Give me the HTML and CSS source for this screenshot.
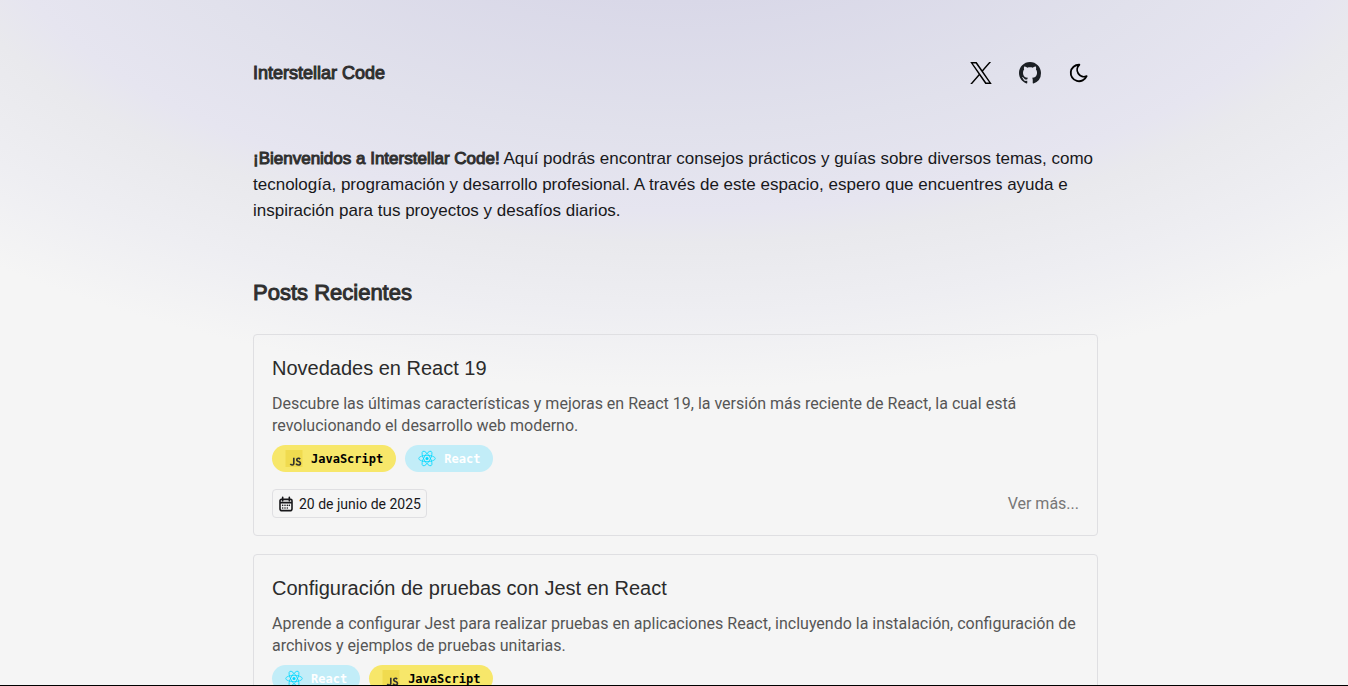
FILE: index.html
```html
<!DOCTYPE html>
<html lang="es">
<head>
<meta charset="utf-8">
<meta name="viewport" content="width=device-width, initial-scale=1">
<title>Interstellar Code</title>
<link rel="stylesheet" href="styles.css">
</head>
<body>
<svg class="defs" aria-hidden="true">
  <symbol id="js" viewBox="0 0 630 630"><path class="js-bg" d="M0 0h630v630H0z"/><path class="js-fg" d="M423 492c13 21 29 36 58 36 25 0 41-12 41-30 0-20-17-28-45-40l-15-7c-45-19-74-43-74-93 0-46 35-81 90-81 39 0 67 14 87 49l-48 31c-10-19-22-26-39-26-18 0-29 11-29 26 0 18 11 25 37 37l15 6c53 23 82 46 82 98 0 56-44 87-103 87-58 0-95-28-113-64zM206 497c9 17 18 32 39 32 20 0 32-8 32-38V283h61v209c0 63-37 92-91 92-48 0-77-25-91-55z"/></symbol>
  <symbol id="react" viewBox="-12 -11 24 22"><circle r="2" fill="currentColor"/><g fill="none" stroke="currentColor"><ellipse rx="11" ry="4.2"/><ellipse rx="11" ry="4.2" transform="rotate(60)"/><ellipse rx="11" ry="4.2" transform="rotate(120)"/></g></symbol>
  <symbol id="calendar" viewBox="0 0 24 24"><path fill="none" stroke="currentColor" stroke-width="2.4" stroke-linecap="round" stroke-linejoin="round" d="M5 5h14a2 2 0 0 1 2 2v12a3 3 0 0 1-3 3H6a3 3 0 0 1-3-3V7a2 2 0 0 1 2-2zM7 2v5M17 2v5M3 10h18M7 14h.01M10.500 14h.01M14 14h.01M17 14h.01M7 18h.01M10.500 18h.01M14 18h.01"/></symbol>
</svg>
<div class="page">
  <header class="header">
    <a class="brand" href="#">Interstellar Code</a>
    <nav class="nav">
      <a class="icon-link" href="#" aria-label="X"><svg width="22" height="22" viewBox="0 0 1200 1227"><path fill="currentColor" d="M714.163 519.284 1160.89 0h-105.86L667.137 450.887 357.328 0H0l468.492 681.821L0 1226.37h105.866l409.625-476.152 327.181 476.152H1200L714.137 519.284h.026ZM569.165 687.828l-47.468-67.894-377.686-540.24h162.604l304.797 435.991 47.468 67.894 396.2 566.721H892.476L569.165 687.854v-.026Z"/></svg></a>
      <a class="icon-link github" href="#" aria-label="GitHub"><svg width="22" height="22" viewBox="0 0 16 16"><path fill="currentColor" d="M8 0C3.58 0 0 3.58 0 8c0 3.54 2.29 6.53 5.47 7.59.4.07.55-.17.55-.38 0-.19-.01-.82-.01-1.49-2.01.37-2.53-.49-2.69-.94-.09-.23-.48-.94-.82-1.13-.28-.15-.68-.52-.01-.53.63-.01 1.08.58 1.23.82.72 1.21 1.87.87 2.33.66.07-.52.28-.87.51-1.07-1.78-.2-3.64-.89-3.64-3.95 0-.87.31-1.59.82-2.15-.08-.2-.36-1.02.08-2.12 0 0 .67-.21 2.2.82.64-.18 1.32-.27 2-.27s1.36.09 2 .27c1.53-1.04 2.2-.82 2.2-.82.44 1.1.16 1.92.08 2.12.51.56.82 1.27.82 2.15 0 3.07-1.87 3.75-3.65 3.95.29.25.54.73.54 1.48 0 1.07-.01 1.93-.01 2.2 0 .21.15.46.55.38A8.01 8.01 0 0 0 16 8c0-4.42-3.58-8-8-8z"/></svg></a>
      <button class="icon-link" type="button" aria-label="Cambiar tema"><svg width="22" height="22" viewBox="0 0 24 24"><path fill="none" stroke="currentColor" stroke-width="2" stroke-linecap="round" stroke-linejoin="round" d="M12 3h.393a7.5 7.5 0 0 0 7.92 12.446A9 9 0 1 1 12 2.992z"/></svg></button>
    </nav>
  </header>
  <main>
    <p class="intro"><strong>¡Bienvenidos a Interstellar Code!</strong> Aquí podrás encontrar consejos prácticos y guías sobre diversos temas, como tecnología, programación y desarrollo profesional. A través de este espacio, espero que encuentres ayuda e inspiración para tus proyectos y desafíos diarios.</p>
    <h2 class="section-title">Posts Recientes</h2>
    <div class="posts">
      <article class="card">
        <h3 class="card-title">Novedades en React 19</h3>
        <p class="card-text">Descubre las últimas características y mejoras en React 19, la versión más reciente de React, la cual está revolucionando el desarrollo web moderno.</p>
        <div class="tags">
          <span class="tag tag-js"><svg width="18" height="17"><use href="#js"/></svg>JavaScript</span>
          <span class="tag tag-react"><svg width="18" height="17"><use href="#react"/></svg><span class="tag-label">React</span></span>
        </div>
        <div class="card-footer">
          <time class="date" datetime="2025-06-20"><svg width="16" height="16"><use href="#calendar"/></svg>20 de junio de 2025</time>
          <a class="more" href="#">Ver más...</a>
        </div>
      </article>
      <article class="card">
        <h3 class="card-title">Configuración de pruebas con Jest en React</h3>
        <p class="card-text">Aprende a configurar Jest para realizar pruebas en aplicaciones React, incluyendo la instalación, configuración de archivos y ejemplos de pruebas unitarias.</p>
        <div class="tags">
          <span class="tag tag-react"><svg width="18" height="17"><use href="#react"/></svg><span class="tag-label">React</span></span>
          <span class="tag tag-js"><svg width="18" height="17"><use href="#js"/></svg>JavaScript</span>
        </div>
      </article>
    </div>
  </main>
</div>
</body>
</html>
```

FILE: styles.css
```css
* { box-sizing: border-box; }
body {
  margin: 0;
  height: 100vh;
  overflow: hidden;
  border-bottom: 1px solid #000;
  background: radial-gradient(1080px 540px at 50% -140px, #d5d4e7 0%, #d9d8e8 26%, #e1e1ec 50%, #e6e5f0 65%, #e9e9ed 71%, #eeeef2 84%, #f5f5f5 98%) #f5f5f5;
  color: #18181b;
  font-family: "Liberation Sans", Arial, sans-serif;
}
h2, h3, p { margin: 0; }
a { color: inherit; text-decoration: none; }
svg { display: block; }
.defs { position: absolute; width: 0; height: 0; }
.page { max-width: 848px; margin: 0 auto; padding: 60px 0 0 3px; }
.header { display: flex; align-items: center; justify-content: space-between; height: 26px; padding-right: 8px; }
.brand, .intro strong, .section-title { color: #2f2f2f; font-weight: 400; -webkit-text-stroke: 1px currentColor; }
.brand { font-size: 18px; }
.nav { display: flex; align-items: center; gap: 27px; }
.icon-link { padding: 0; border: 0; background: none; color: #000; }
.github { color: #1b1f24; }
.intro { margin-top: 60px; font-size: 17px; line-height: 26px; }
.section-title { margin-top: 55px; font-size: 22px; line-height: 28px; }
.posts { display: grid; gap: 18px; margin-top: 27px; }
.card { padding: 18px 18px 17px; border: 1px solid #dfdfe2; border-radius: 4px; }
.card-title { color: #2b2b2b; font-size: 20px; line-height: 30px; font-weight: 400; }
.card-text, .date, .more { font-family: Roboto, sans-serif; }
.card-text { margin-top: 10px; color: #555; font-size: 16px; line-height: 22px; }
.tags { display: flex; gap: 9px; margin-top: 8px; }
.tag { display: flex; align-items: center; gap: 8px; height: 27px; padding: 0 13px; border-radius: 14px; font: bold 12px "DejaVu Sans Mono", monospace; }
.tag-js { background: #f7e76a; color: #000; }
.tag-react { background: #c2edf8; color: #00d8ff; }
.tag-label { color: #fff; }
.js-bg { fill: #f0db4f; }
.js-fg { fill: #323330; }
.card-footer { display: flex; align-items: center; justify-content: space-between; margin-top: 17px; }
.date { display: flex; align-items: center; gap: 5px; height: 29px; padding: 0 5px; border: 1px solid #dfdfe2; border-radius: 4px; font-size: 14px; }
.more { color: #777; font-size: 16px; }
```
